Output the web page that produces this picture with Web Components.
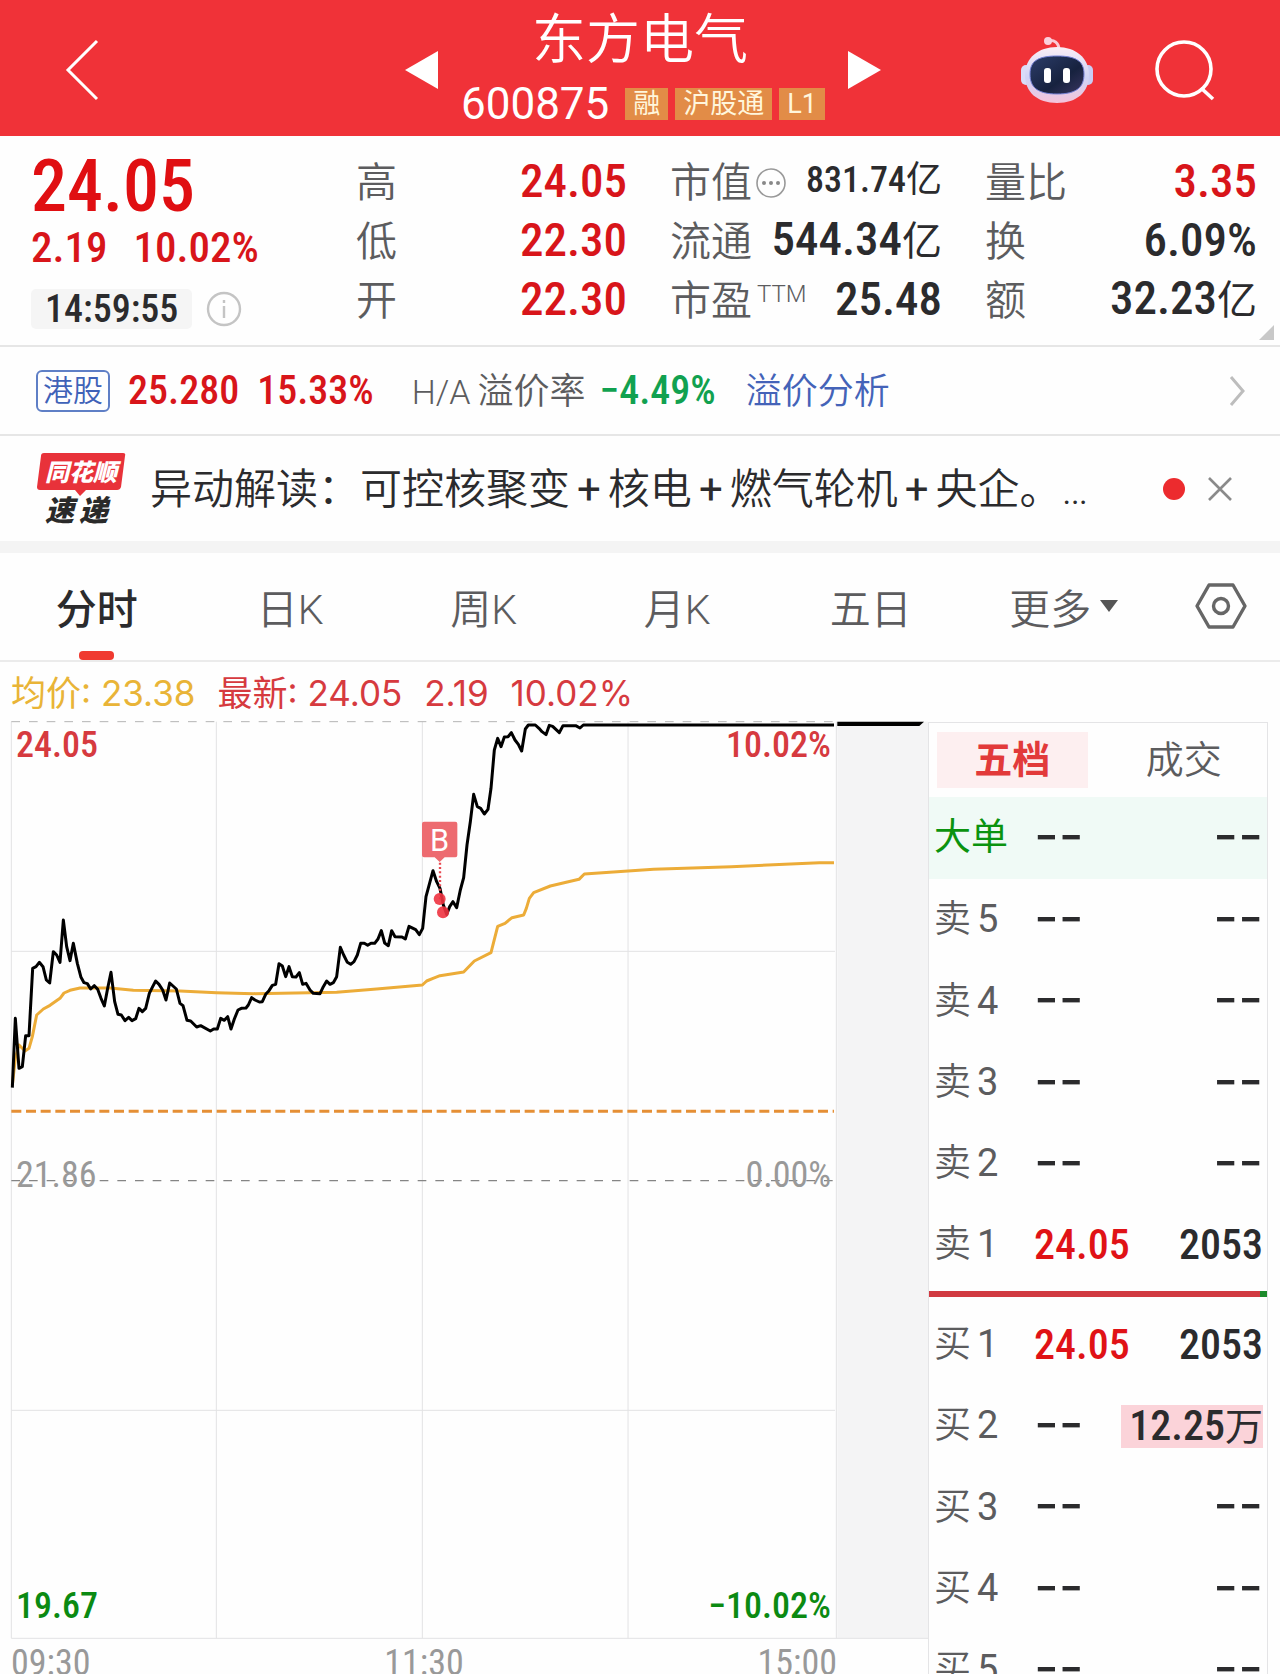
<!DOCTYPE html>
<html lang="zh-CN">
<head>
    <meta charset="UTF-8">
    <meta name="viewport" content="width=device-width, initial-scale=1.0">
    <title>东方电气 600875</title>
    <style>
        :root {
            --red: #d8151a;
            --up: #d63a3f;
            --down: #0b8a12;
            --ink: #2b2b2d;
            --muted: #5c5c5e;
            --line: #e6e6e6;
            --num: 'Roboto Condensed', 'Noto Sans CJK SC', sans-serif;
        }
        body {
            margin: 0;
            background: #fefefe;
            color: var(--ink);
            font-family: Roboto, 'Noto Sans CJK SC', sans-serif;
        }
    </style>
</head>
<body>
    <stock-app>
        <stock-header slot="header" name="东方电气" code="600875">
            <stock-tag>融</stock-tag>
            <stock-tag>沪股通</stock-tag>
            <stock-tag>L1</stock-tag>
        </stock-header>
        <stock-quote></stock-quote>
        <hk-premium></hk-premium>
        <news-flash>异动解读：可控核聚变<b>+</b>核电<b>+</b>燃气轮机<b>+</b>央企。…</news-flash>
        <chart-tabs></chart-tabs>
        <chart-legend></chart-legend>
        <minute-chart slot="chart"></minute-chart>
        <order-book slot="book"></order-book>
    </stock-app>

    <script>
        // Small base class: every element renders its template into an open root
        class BaseElement extends HTMLElement {
            connectedCallback() {
                if (!this.shadowRoot) {
                    this.attachShadow({mode: 'open'}).innerHTML = this.render();
                }
            }
        }

        const resetButton = `
            button {
                background: none;
                border: 0;
                padding: 0;
                margin: 0;
                font: inherit;
                color: inherit;
                cursor: pointer;
            }
            svg { display: block; }
        `;

        class StockApp extends BaseElement {
            render() {
                return `
                <style>
                    :host {
                        display: block;
                        height: 100vh;
                        overflow: hidden;
                    }
                    .trade {
                        display: grid;
                        grid-template-columns: minmax(0, 928fr) minmax(0, 340fr);
                        padding-right: 12px;
                        align-items: start;
                    }
                </style>
                <slot name="header"></slot>
                <slot></slot>
                <div class="trade">
                    <slot name="chart"></slot>
                    <slot name="book"></slot>
                </div>`;
            }
        }

        class StockTag extends BaseElement {
            render() {
                return `
                <style>
                    :host {
                        background: #e28c47;
                        color: #fff6dc;
                        font-size: 27px;
                        line-height: 32px;
                        padding: 0 8px;
                        font-weight: 400;
                    }
                </style>
                <slot></slot>`;
            }
        }

        class StockHeader extends BaseElement {
            render() {
                return `
                <style>
                    ${resetButton}
                    :host {
                        display: grid;
                        grid-template-columns: 1fr auto 1fr;
                        align-items: center;
                        height: 136px;
                        padding-top: 3px;
                        box-sizing: border-box;
                        background: #f03238;
                        color: #fff;
                    }
                    .back { margin-left: 64px; justify-self: start; }
                    .stock { display: flex; align-items: center; gap: 22px; padding-left: 6px; }
                    .title { display: flex; flex-direction: column; align-items: center; }
                    h1 { font-size: 54px; line-height: 68px; font-weight: 350; margin: 0; padding-right: 6px; }
                    .sub { display: flex; align-items: center; gap: 7px; height: 58px; }
                    .code { font-size: 44px; line-height: 52px; font-weight: 400; margin-right: 9px; }
                    .actions { display: flex; align-items: center; justify-content: flex-end; gap: 60px; padding-right: 64px; }
                </style>
                <button class="back" aria-label="返回">
                    <svg width="36" height="64" viewBox="0 0 36 64" fill="none" stroke="#fff" stroke-width="3"><path d="M33 3 4 32l29 29"/></svg>
                </button>
                <div class="stock">
                    <button aria-label="上一只">
                        <svg width="35" height="40" viewBox="0 0 35 40" fill="#fff"><path d="M34 1v38L1 20z"/></svg>
                    </button>
                    <div class="title">
                        <h1>${this.getAttribute('name')}</h1>
                        <div class="sub"><span class="code">${this.getAttribute('code')}</span><slot></slot></div>
                    </div>
                    <button aria-label="下一只">
                        <svg width="35" height="40" viewBox="0 0 35 40" fill="#fff"><path d="M1 1v38l33-19z"/></svg>
                    </button>
                </div>
                <div class="actions">
                    <button aria-label="智能助手">
                        <svg width="74" height="68" viewBox="0 0 74 68">
                            <defs>
                                <linearGradient id="shell" x1="0" y1="0" x2="0" y2="1">
                                    <stop offset="0" stop-color="#fbeef6"/>
                                    <stop offset=".55" stop-color="#cfd3f6"/>
                                    <stop offset="1" stop-color="#f4c3da"/>
                                </linearGradient>
                                <linearGradient id="face" x1="0" y1="0" x2="1" y2="1">
                                    <stop offset="0" stop-color="#2c3d6a"/>
                                    <stop offset=".6" stop-color="#17223f"/>
                                    <stop offset="1" stop-color="#3a3560"/>
                                </linearGradient>
                            </defs>
                            <path d="M28 5c6-2 11 2 11 9" fill="none" stroke="#fbc9d6" stroke-width="3"/>
                            <circle cx="28" cy="5" r="4" fill="#fbd0dc"/>
                            <rect x="1" y="29" width="10" height="20" rx="5" fill="#d9dcf8"/>
                            <rect x="63" y="29" width="10" height="20" rx="5" fill="#c9cdf4"/>
                            <path d="M37 11c19 0 32 11 32 28S57 67 37 67 5 56 5 39s13-28 32-28z" fill="url(#shell)"/>
                            <path d="M37 20c19 0 27 5 27 18s-7 20-27 20-27-7-27-20 8-18 27-18z" fill="url(#face)" stroke="#7682d6" stroke-width="1"/>
                            <rect x="24" y="32" width="7" height="15" rx="3" fill="#fff"/>
                            <rect x="43" y="32" width="7" height="15" rx="3" fill="#fff"/>
                        </svg>
                    </button>
                    <button aria-label="搜索">
                        <svg width="62" height="62" viewBox="0 0 62 62" fill="none" stroke="#fff" stroke-width="3.6"><circle cx="30" cy="30" r="27"/><path d="M47 49l12 11"/></svg>
                    </button>
                </div>`;
            }
        }

        class StockQuote extends BaseElement {
            render() {
                const columns = [
                    [['高', '24.05', 'up'], ['低', '22.30', 'up'], ['开', '22.30', 'up']],
                    [['市值', '831.74<i>亿</i>', 'small', 'more'], ['流通', '544.34<i>亿</i>', ''], ['市盈', '25.48', '', 'ttm']],
                    [['量比', '3.35', 'up'], ['换', '6.09%', ''], ['额', '32.23<i>亿</i>', '']],
                ];
                const extras = {
                    more: '<svg width="32" height="32" viewBox="0 0 32 32"><circle cx="16" cy="16" r="14" fill="none" stroke="#999" stroke-width="1.6"/><g fill="#888"><circle cx="9" cy="16" r="2"/><circle cx="16" cy="16" r="2"/><circle cx="23" cy="16" r="2"/></g></svg>',
                    ttm: '<sup>TTM</sup>',
                };
                return `
                <style>
                    ${resetButton}
                    :host {
                        display: grid;
                        grid-template-columns: 282fr 271fr 272fr 272fr;
                        column-gap: 43px;
                        padding: 14px 23px 16px 31px;
                        border-bottom: 2px solid var(--line);
                        position: relative;
                    }
                    .now { color: #e00f12; font-family: var(--num); font-weight: 500; }
                    .price { font-size: 72px; line-height: 74px; }
                    .change { display: flex; gap: 26px; font-size: 43px; line-height: 46px; color: var(--red); }
                    .time { display: flex; align-items: center; gap: 14px; margin-top: 19px; }
                    time {
                        background: #f5f5f5;
                        border-radius: 5px;
                        color: var(--ink);
                        font-size: 38px;
                        line-height: 40px;
                        padding: 0 14px;
                    }
                    dl { margin: 0; padding-top: 1px; }
                    .row { display: flex; justify-content: space-between; align-items: center; height: 59px; white-space: nowrap; }
                    dt { display: flex; align-items: center; gap: 3px; font-size: 41px; line-height: 48px; padding-top: 5px; font-weight: 350; color: var(--muted); }
                    dd { margin: 0; font: 500 47px/59px var(--num); }
                    dd i { font-style: normal; font-weight: 400; font-size: 40px; }
                    dd.up { color: var(--red); }
                    dd.small { font-size: 36px; }
                    dd.small i { font-size: 36px; }
                    sup { font-size: 24px; line-height: 24px; align-self: flex-start; margin-top: 5px; padding-left: 2px; }
                    .corner { position: absolute; right: 6px; bottom: 5px; }
                </style>
                <div class="now">
                    <div class="price">24.05</div>
                    <div class="change"><span>2.19</span><span>10.02%</span></div>
                    <div class="time">
                        <time>14:59:55</time>
                        <button aria-label="说明">
                            <svg width="36" height="36" viewBox="0 0 36 36" fill="none" stroke="#c4c4c4" stroke-width="2.4"><circle cx="18" cy="18" r="16"/><path d="M18 15v12M18 9v3"/></svg>
                        </button>
                    </div>
                </div>
                ${columns.map(rows => `<dl>${rows.map(([label, value, cls, extra]) => `
                    <div class="row"><dt>${label}${extras[extra] || ''}</dt><dd class="${cls}">${value}</dd></div>`).join('')}</dl>`).join('')}
                <svg class="corner" width="15" height="15" viewBox="0 0 15 15" fill="#c8c8c8"><path d="M15 0v15H0z"/></svg>`;
            }
        }

        class HkPremium extends BaseElement {
            render() {
                return `
                <style>
                    ${resetButton}
                    :host {
                        display: flex;
                        align-items: center;
                        height: 87px;
                        padding: 0 34px 0 36px;
                        border-bottom: 2px solid var(--line);
                        white-space: nowrap;
                    }
                    .badge {
                        border: 2px solid #5f7fc6;
                        border-radius: 6px;
                        color: #3f62b8;
                        font-size: 30px;
                        line-height: 38px;
                        padding: 0 5px;
                        font-weight: 350;
                    }
                    b { font: 500 40px/44px var(--num); color: var(--red); margin-left: 18px; }
                    .label, a { font-size: 36px; line-height: 44px; padding-top: 3px; font-weight: 350; }
                    .label { color: var(--muted); margin-left: 38px; }
                    .label span { font-size: 34px; margin-right: 7px; }
                    b.down { color: #11a150; margin-left: 14px; }
                    a { color: #4463b8; text-decoration: none; margin-left: 30px; }
                    .go { margin-left: auto; }
                </style>
                <span class="badge">港股</span>
                <b>25.280</b>
                <b>15.33%</b>
                <span class="label"><span>H/A</span>溢价率</span>
                <b class="down">−4.49%</b>
                <a href="#premium">溢价分析</a>
                <button class="go" aria-label="查看">
                    <svg width="17" height="32" viewBox="0 0 17 32" fill="none" stroke="#bdbdbd" stroke-width="3"><path d="M2 2l12 14L2 30"/></svg>
                </button>`;
            }
        }

        class NewsFlash extends BaseElement {
            render() {
                return `
                <style>
                    ${resetButton}
                    :host {
                        display: flex;
                        align-items: center;
                        height: 105px;
                        padding: 0 47px 0 36px;
                        border-bottom: 12px solid #f4f4f4;
                    }
                    a {
                        flex: 1;
                        min-width: 0;
                        margin-left: 24px;
                        padding-top: 3px;
                        color: var(--ink);
                        font-size: 42px;
                        font-weight: 350;
                        line-height: 60px;
                        text-decoration: none;
                        white-space: nowrap;
                    }
                    ::slotted(b) { font-weight: 400; padding: 0 7px; }
                    i { width: 22px; height: 22px; border-radius: 50%; background: #ec2b2e; margin-right: 22px; }
                </style>
                <svg width="90" height="88" viewBox="0 -6 90 88">
                    <path d="M8 2h79q3 0 2 3l-4 31q-1 3-4 3H50l-6 6-5-6H4q-3 0-3-3L5 5q0-3 3-3z" fill="#e8323a"/>
                    <g font-family="'Noto Sans CJK SC', sans-serif" font-weight="900" font-style="italic">
                        <text x="9" y="30" font-size="24" fill="#fff">同花顺</text>
                        <text x="9" y="70" font-size="29" fill="#2a2a2a">速</text>
                        <text x="43" y="70" font-size="29" fill="#2a2a2a">递</text>
                    </g>
                </svg>
                <a href="#news"><slot></slot></a>
                <i></i>
                <button aria-label="关闭">
                    <svg width="26" height="26" viewBox="0 0 26 26" stroke="#8a8a8a" stroke-width="2.6"><path d="M2 2l22 22M24 2L2 24"/></svg>
                </button>`;
            }
        }

        class ChartTabs extends BaseElement {
            render() {
                return `
                <style>
                    ${resetButton}
                    :host { display: block; border-bottom: 2px solid #ebebeb; }
                    nav {
                        display: grid;
                        grid-template-columns: repeat(6, 387fr) 238fr;
                        height: 107px;
                    }
                    button {
                        display: flex;
                        align-items: center;
                        justify-content: center;
                        gap: 8px;
                        font-size: 41px;
                        font-weight: 350;
                        color: var(--muted);
                        white-space: nowrap;
                        padding-bottom: 2px;
                    }
                    .active { font-weight: 500; color: var(--ink); position: relative; }
                    .active::after {
                        content: '';
                        position: absolute;
                        bottom: 0;
                        width: 35px;
                        height: 9px;
                        border-radius: 4px;
                        background: #f03a30;
                    }
                </style>
                <nav>
                    <button class="active">分时</button>
                    <button>日K</button>
                    <button>周K</button>
                    <button>月K</button>
                    <button>五日</button>
                    <button>更多<svg width="20" height="14" viewBox="0 0 20 14" fill="#555"><path d="M1 1h18l-9 12z"/></svg></button>
                    <button aria-label="设置">
                        <svg width="52" height="46" viewBox="0 0 52 46" fill="none" stroke="#666" stroke-width="3.4" stroke-linejoin="round"><path d="M14 2h24l12 21-12 21H14L2 23z"/><circle cx="26" cy="23" r="7.5"/></svg>
                    </button>
                </nav>`;
            }
        }

        class ChartLegend extends BaseElement {
            render() {
                return `
                <style>
                    :host {
                        display: flex;
                        gap: 22px;
                        padding: 3px 11px 0;
                        height: 58px;
                        align-items: center;
                        font-family: Inter, 'Noto Sans CJK SC', sans-serif;
                        font-size: 35px;
                        line-height: 54px;
                        color: var(--up);
                        box-sizing: border-box;
                    }
                    .avg { color: #e9b437; }
                </style>
                <span class="avg">均价: 23.38</span>
                <span>最新: 24.05</span>
                <span>2.19</span>
                <span>10.02%</span>`;
            }
        }

        // Points are in chart units, three per pixel at the full width
        const PRICE = [37,1118, 46,910, 57,1060, 67,1055, 77,962, 87,962, 98,760, 108,755, 118,742, 129,755, 139,795, 149,804, 160,710, 170,720, 180,742, 190,615, 200,695, 210,737, 220,685, 232,745, 243,787, 252,803, 262,806, 272,822, 283,812, 293,823, 303,850, 313,873, 323,820, 333,772, 344,860, 354,898, 364,900, 375,917, 386,907, 396,917, 407,911, 417,880, 427,890, 437,880, 448,835, 458,815, 467,798, 477,808, 488,825, 498,855, 509,804, 519,813, 529,822, 540,865, 549,872, 561,916, 572,918, 590,936, 602,932, 631,948, 641,942, 652,942, 662,910, 673,916, 683,905, 693,942, 703,912, 714,885, 724,880, 738,879, 745,870, 755,848, 765,855, 778,861, 787,860, 797,838, 807,827, 817,811, 827,808, 837,746, 847,753, 857,785, 867,755, 877,785, 888,786, 898,773, 908,808, 918,805, 930,825, 940,835, 960,836, 970,815, 980,798, 990,808, 1000,803, 1010,785, 1021,697, 1031,720, 1042,742, 1052,748, 1062,740, 1072,720, 1082,685, 1093,685, 1103,691, 1113,685, 1124,685, 1134,672, 1144,647, 1154,684, 1165,692, 1175,647, 1185,665, 1206,666, 1216,672, 1227,634, 1247,644, 1258,659, 1268,640, 1278,545, 1299,467, 1310,500, 1320,520, 1330,570, 1340,598, 1349,575, 1359,560, 1370,578, 1381,525, 1391,488, 1401,390, 1411,320, 1421,238, 1432,275, 1442,280, 1453,297, 1464,283, 1473,220, 1483,105, 1493,70, 1503,95, 1513,66, 1524,65, 1534,53, 1545,75, 1555,88, 1565,108, 1576,42, 1585,30, 1606,30, 1617,40, 1626,50, 1638,59, 1648,31, 1658,34, 1678,53, 1689,32, 1727,32, 1740,39, 1750,30, 2502,30];
        const AVERAGE = [37,1110, 46,1030, 57,990, 75,1008, 87,1000, 97,965, 110,900, 130,882, 150,871, 180,850, 192,834, 210,826, 240,819, 330,819, 400,826, 540,828, 650,833, 760,836, 1010,832, 1130,822, 1267,810, 1280,798, 1299,790, 1320,782, 1391,771, 1423,738, 1473,713, 1493,634, 1515,625, 1536,608, 1571,600, 1579,580, 1588,550, 1601,533, 1651,513, 1737,493, 1753,477, 1884,468, 1961,463, 2194,455, 2458,443, 2502,443];

        class MinuteChart extends BaseElement {
            render() {
                return `
                <style>
                    :host { display: block; position: relative; color: var(--up); font: 400 36px/36px var(--num); }
                    svg { display: block; width: 100%; height: auto; }
                    .label { position: absolute; font-weight: 500; }
                    .left { left: 16px; }
                    .right { right: 97px; }
                    .top { top: 7px; }
                    .mid { top: 45%; padding-top: 4px; color: #999; font-weight: 400; }
                    .low { bottom: 58px; color: var(--down); }
                    .axis { display: flex; justify-content: space-between; padding: 5px 91px 0 11px; color: #999; line-height: 38px; }
                </style>
                <svg viewBox="0 15 2784 2758">
                    <rect x="2512" y="20" width="272" height="2750" fill="#f4f4f5"/>
                    <g fill="none" stroke="#e2e2e4" stroke-width="3">
                        <path d="M34 20V2770M649 20V2770M1267 20V2770M1884 20V2770M2509 20V2770"/>
                        <path d="M34 709H2505M34 2086H2505M34 2770H2784"/>
                    </g>
                    <path d="M34 20H2505" stroke="#b5b5b5" stroke-width="3" stroke-dasharray="26 27"/>
                    <path d="M34 1397H2511" stroke="#858585" stroke-width="4" stroke-dasharray="26 27"/>
                    <path d="M34 1189H2502" stroke="#e58f35" stroke-width="9" stroke-dasharray="30 14"/>
                    <polyline points="${AVERAGE}" fill="none" stroke="#ecac38" stroke-width="9" stroke-linejoin="round"/>
                    <polyline points="${PRICE}" fill="none" stroke="#000" stroke-width="9" stroke-linejoin="round"/>
                    <path d="M2512 20H2772L2758 33H2512z"/>
                    <path d="M1320 430V560" stroke="#e8474f" stroke-width="7" stroke-dasharray="6 7"/>
                    <g fill="#ee3340" fill-opacity=".9">
                        <circle cx="1319" cy="552" r="18"/>
                        <circle cx="1329" cy="592" r="18"/>
                    </g>
                    <path d="M1272 320h94q6 0 6 6v95q0 6-6 6h-32l-15 14-15-14h-32q-6 0-6-6v-95q0-6 6-6z" fill="#ed6b70"/>
                    <text x="1319" y="408" text-anchor="middle" font-family="Roboto, sans-serif" font-size="92" fill="#fff">B</text>
                </svg>
                <span class="label left top">24.05</span>
                <span class="label right top">10.02%</span>
                <span class="label left mid">21.86</span>
                <span class="label right mid">0.00%</span>
                <span class="label left low">19.67</span>
                <span class="label right low">−10.02%</span>
                <div class="axis"><span>09:30</span><span>11:30</span><span>15:00</span></div>`;
            }
        }

        class OrderBook extends BaseElement {
            row([label, price, volume]) {
                const cell = value => value ? value : '<span class="none">--</span>';
                const side = label.replace(/(\d)/, '<span>$1</span>');
                return `<tr class="${label === '大单' ? 'big' : ''}"><th scope="row">${side}</th><td class="price">${cell(price)}</td><td class="volume">${cell(volume)}</td></tr>`;
            }

            render() {
                const sell = [['大单'], ['卖5'], ['卖4'], ['卖3'], ['卖2'], ['卖1', '24.05', '2053']];
                const buy = [['买1', '24.05', '2053'], ['买2', '', '<mark>12.25<i>万</i></mark>'], ['买3'], ['买4'], ['买5']];
                return `
                <style>
                    ${resetButton}
                    :host { display: block; border: 1px solid #e4e4e6; margin-top: 2px; }
                    .tabs { display: grid; grid-template-columns: 1fr 1fr; padding: 9px 8px; gap: 21px; }
                    .tabs button { font-size: 38px; font-weight: 350; line-height: 56px; color: var(--muted); }
                    .tabs .active { background: #fdeff0; color: #e23a3a; font-weight: 700; }
                    table { width: 100%; border-collapse: collapse; table-layout: fixed; }
                    tr { height: 81px; }
                    tr.big, tr:nth-child(3) { height: 82px; }
                    tr.big { background: #f0faf6; }
                    tr.big th { color: #0b930f; font-weight: 400; }
                    th, td { padding: 0; text-align: left; white-space: nowrap; }
                    th { width: 105px; padding-left: 5px; box-sizing: border-box; font-size: 37px; line-height: 56px; font-weight: 350; color: var(--muted); }
                    th span { margin-left: 6px; font-size: 38px; font-weight: 400; }
                    td { font: 500 42px/56px var(--num); }
                    .price { color: #e01216; width: 76px; }
                    .volume { text-align: right; padding-right: 4px; }
                    .none { font: 400 54px/54px Inter, sans-serif; color: var(--ink); }
                    mark { background: #fbd3d9; color: var(--ink); padding-left: 8px; display: inline-block; line-height: 41px; }
                    mark i { font-style: normal; font-weight: 400; font-size: 38px; }
                    hr { border: 0; height: 6px; margin: 6px 0 7px; background: linear-gradient(90deg, #d13a41 98%, #1c8a2b 98%); }
                </style>
                <div class="tabs"><button class="active">五档</button><button>成交</button></div>
                <table><tbody>${sell.map(this.row).join('')}</tbody></table>
                <hr>
                <table><tbody>${buy.map(this.row).join('')}</tbody></table>`;
            }
        }

        customElements.define('stock-app', StockApp);
        customElements.define('stock-tag', StockTag);
        customElements.define('stock-header', StockHeader);
        customElements.define('stock-quote', StockQuote);
        customElements.define('hk-premium', HkPremium);
        customElements.define('news-flash', NewsFlash);
        customElements.define('chart-tabs', ChartTabs);
        customElements.define('chart-legend', ChartLegend);
        customElements.define('minute-chart', MinuteChart);
        customElements.define('order-book', OrderBook);
    </script>
</body>
</html>
